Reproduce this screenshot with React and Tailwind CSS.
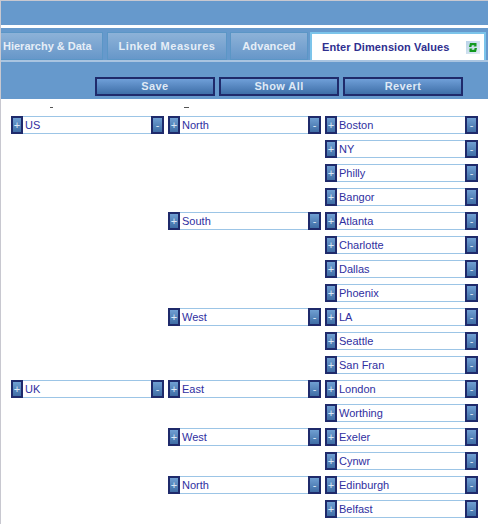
import React from "react";

const rows = [
  ["US", "North", "Boston"],
  [null, null, "NY"],
  [null, null, "Philly"],
  [null, null, "Bangor"],
  [null, "South", "Atlanta"],
  [null, null, "Charlotte"],
  [null, null, "Dallas"],
  [null, null, "Phoenix"],
  [null, "West", "LA"],
  [null, null, "Seattle"],
  [null, null, "San Fran"],
  ["UK", "East", "London"],
  [null, null, "Worthing"],
  [null, "West", "Exeler"],
  [null, null, "Cynwr"],
  [null, "North", "Edinburgh"],
  [null, null, "Belfast"],
];

function SmallBtn({ label, wide }) {
  return (
    <div
      className={
        "flex h-[18px] shrink-0 items-center justify-center border-2 border-[#1f2a6b] bg-gradient-to-b from-[#6f9fd2] to-[#3f6da5] text-[11px] leading-none text-[#dbe8f6] " +
        (wide ? "w-[13px]" : "w-[12px]")
      }
    >
      {label}
    </div>
  );
}

function Cell({ value }) {
  if (!value) return <div className="w-[153px] shrink-0" />;
  return (
    <div className="flex w-[153px] shrink-0">
      <SmallBtn label="+" />
      <div className="flex h-[18px] w-[128px] items-center border-y border-[#9cc5e6] bg-white pl-[2px] text-[11px] text-[#2f2f9f]">
        {value}
      </div>
      <SmallBtn label="-" wide />
    </div>
  );
}

function Tab({ label, className }) {
  return (
    <div
      className={
        "flex h-[28px] items-center whitespace-nowrap border border-[#5b96c6] bg-gradient-to-b from-[#8db2d8] to-[#6797c9] text-[11px] font-bold text-[#e6eef7] " +
        className
      }
    >
      {label}
    </div>
  );
}

function ActionBtn({ label }) {
  return (
    <div className="flex h-[19px] w-[120px] items-center justify-center border-2 border-[#1f2a6b] bg-gradient-to-b from-[#6f9fd8] to-[#3f6fa8] text-[11px] font-bold tracking-[0.4px] text-[#dfe9f5]">
      {label}
    </div>
  );
}

export default function App() {
  return (
    <div className="h-[524px] w-[488px] overflow-hidden border-t border-l border-[#c8c8d0] bg-white font-['Liberation_Sans',Arial,sans-serif]">
      <div className="h-[24px] bg-[#6699cc]" />
      <div className="h-[3px] bg-white" />
      <div className="flex h-[32px] items-start bg-[#6699cc] pt-[4px] pr-[1px]">
        <Tab label="Hierarchy & Data" className="w-[102px] border-l-0 pl-[2px] tracking-[0px]" />
        <Tab label="Linked Measures" className="ml-[4px] w-[120px] justify-center tracking-[0.5px]" />
        <Tab label="Advanced" className="ml-[3px] w-[78px] justify-center tracking-[0.1px]" />
        <div className="ml-[2px] flex h-[28px] w-[176px] items-center whitespace-nowrap border-2 border-[#7cc4ea] border-b-0 bg-white pl-[10px] text-[11px] font-bold tracking-[0.1px] text-[#2f2f8f]">
          <span className="w-[132px]">Enter Dimension Values</span>
          <span className="ml-[12px] flex h-[13px] w-[14px] items-center justify-center bg-gradient-to-br from-[#b9d3e8] to-[#e3edf6]">
            <svg width="10" height="11" viewBox="0 0 10 11">
              <path d="M1 5 L2 1 H8.5 V4.5 L5.5 4.5 L6.5 3.2 H3.8 L3.4 5 Z" fill="#12991f" />
              <path d="M9 6 L8 10 H1.5 V6.5 L4.5 6.5 L3.5 7.8 H6.2 L6.6 6 Z" fill="#12991f" />
            </svg>
          </span>
        </div>
      </div>
      <div className="h-[2px] bg-[#a9c4e0]" />
      <div className="flex h-[37px] justify-end gap-[4px] bg-[#6699cc] pt-[15px] pr-[25px]">
        <ActionBtn label="Save" />
        <ActionBtn label="Show All" />
        <ActionBtn label="Revert" />
      </div>
      <div className="relative flex flex-col gap-[6px] pt-[17px] pl-[10px]">
        <div className="absolute top-[8px] left-[49px] h-px w-[3px] bg-[#555]" />
        <div className="absolute top-[8px] left-[183px] h-px w-[5px] bg-[#555]" />
        {rows.map((row, i) => (
          <div key={i} className="flex gap-[4px]">
            <Cell value={row[0]} />
            <Cell value={row[1]} />
            <Cell value={row[2]} />
          </div>
        ))}
      </div>
    </div>
  );
}
